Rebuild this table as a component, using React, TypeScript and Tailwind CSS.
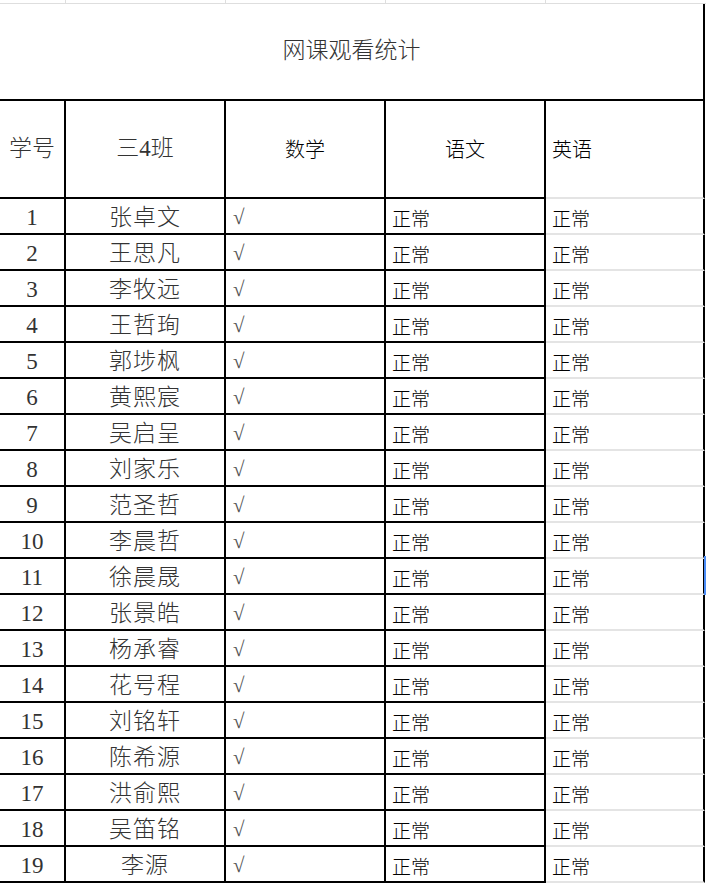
const names = [
  "张卓文",
  "王思凡",
  "李牧远",
  "王哲珣",
  "郭埗枫",
  "黄熙宸",
  "吴启呈",
  "刘家乐",
  "范圣哲",
  "李晨哲",
  "徐晨晟",
  "张景皓",
  "杨承睿",
  "花号程",
  "刘铭轩",
  "陈希源",
  "洪俞熙",
  "吴笛铭",
  "李源",
];

const song = "font-['Liberation_Serif','Noto_Sans_CJK_SC',serif] font-light text-[#333]";
const hei = "font-['Noto_Sans_CJK_SC',sans-serif] font-light text-black";

const cols = "grid grid-cols-[66px_160px_160px_160px_159px]";

function App() {
  return (
    <div className="w-[706px] h-[883px] overflow-hidden bg-white relative">
      {/* previous sheet row, only its bottom edge shows */}
      <div className={`${cols} h-[4px] border-b border-[#dedede]`}>
        <div className="border-r border-[#dedede]" />
        <div className="border-r border-[#dedede]" />
        <div className="border-r border-[#dedede]" />
        <div className="border-r border-[#dedede]" />
        <div />
      </div>

      <div className="h-[97px] w-[705px] flex items-center justify-center border-b-2 border-r-2 border-black">
        <span className={`${song} text-[23px]`}>网课观看统计</span>
      </div>

      <div className={`${cols} h-[98px]`}>
        <div className="flex items-center justify-center border-r-2 border-b-2 border-black">
          <span className={`${song} text-[23px]`}>学号</span>
        </div>
        <div className="flex items-center justify-center border-r-2 border-b-2 border-black">
          <span className={`${song} text-[23px]`}>三4班</span>
        </div>
        <div className="flex items-center justify-center border-r-2 border-b-2 border-black">
          <span className={`${hei} text-[20px]`}>数学</span>
        </div>
        <div className="flex items-center justify-center border-r-2 border-b-2 border-black">
          <span className={`${hei} text-[20px]`}>语文</span>
        </div>
        <div className="flex items-center pl-[6px] border-r-2 border-b-2 border-r-black border-b-[#e4e4e4]">
          <span className={`${hei} text-[20px]`}>英语</span>
        </div>
      </div>

      {names.map((name, i) => (
        <div key={i} className={`${cols} h-[36px]`}>
          <div className="flex items-center justify-center pt-[3px] border-r-2 border-b-2 border-black">
            <span className={`${song} text-[23px] leading-none`}>{i + 1}</span>
          </div>
          <div className="flex items-center justify-center pt-[3px] border-r-2 border-b-2 border-black">
            <span className={`${song} text-[23px] leading-none tracking-[1px]`}>{name}</span>
          </div>
          <div className="flex items-center pl-[7px] pt-[2px] border-r-2 border-b-2 border-black">
            <span className="font-['Liberation_Serif','DejaVu_Serif',serif] text-[21px] leading-none text-[#555]">√</span>
          </div>
          <div className="flex items-center pl-[6px] pt-[3px] border-r-2 border-b-2 border-black">
            <span className={`${hei} text-[19px] leading-none`}>正常</span>
          </div>
          <div className="flex items-center pl-[6px] pt-[3px] border-r-2 border-b-2 border-r-black border-b-[#e4e4e4]">
            <span className={`${hei} text-[19px] leading-none`}>正常</span>
          </div>
        </div>
      ))}

      {/* selected-row marker on the right edge */}
      <div className="absolute left-[704px] top-[556px] w-[2px] h-[39px] bg-[#4a8cf7]" />
    </div>
  );
}

export default App;
